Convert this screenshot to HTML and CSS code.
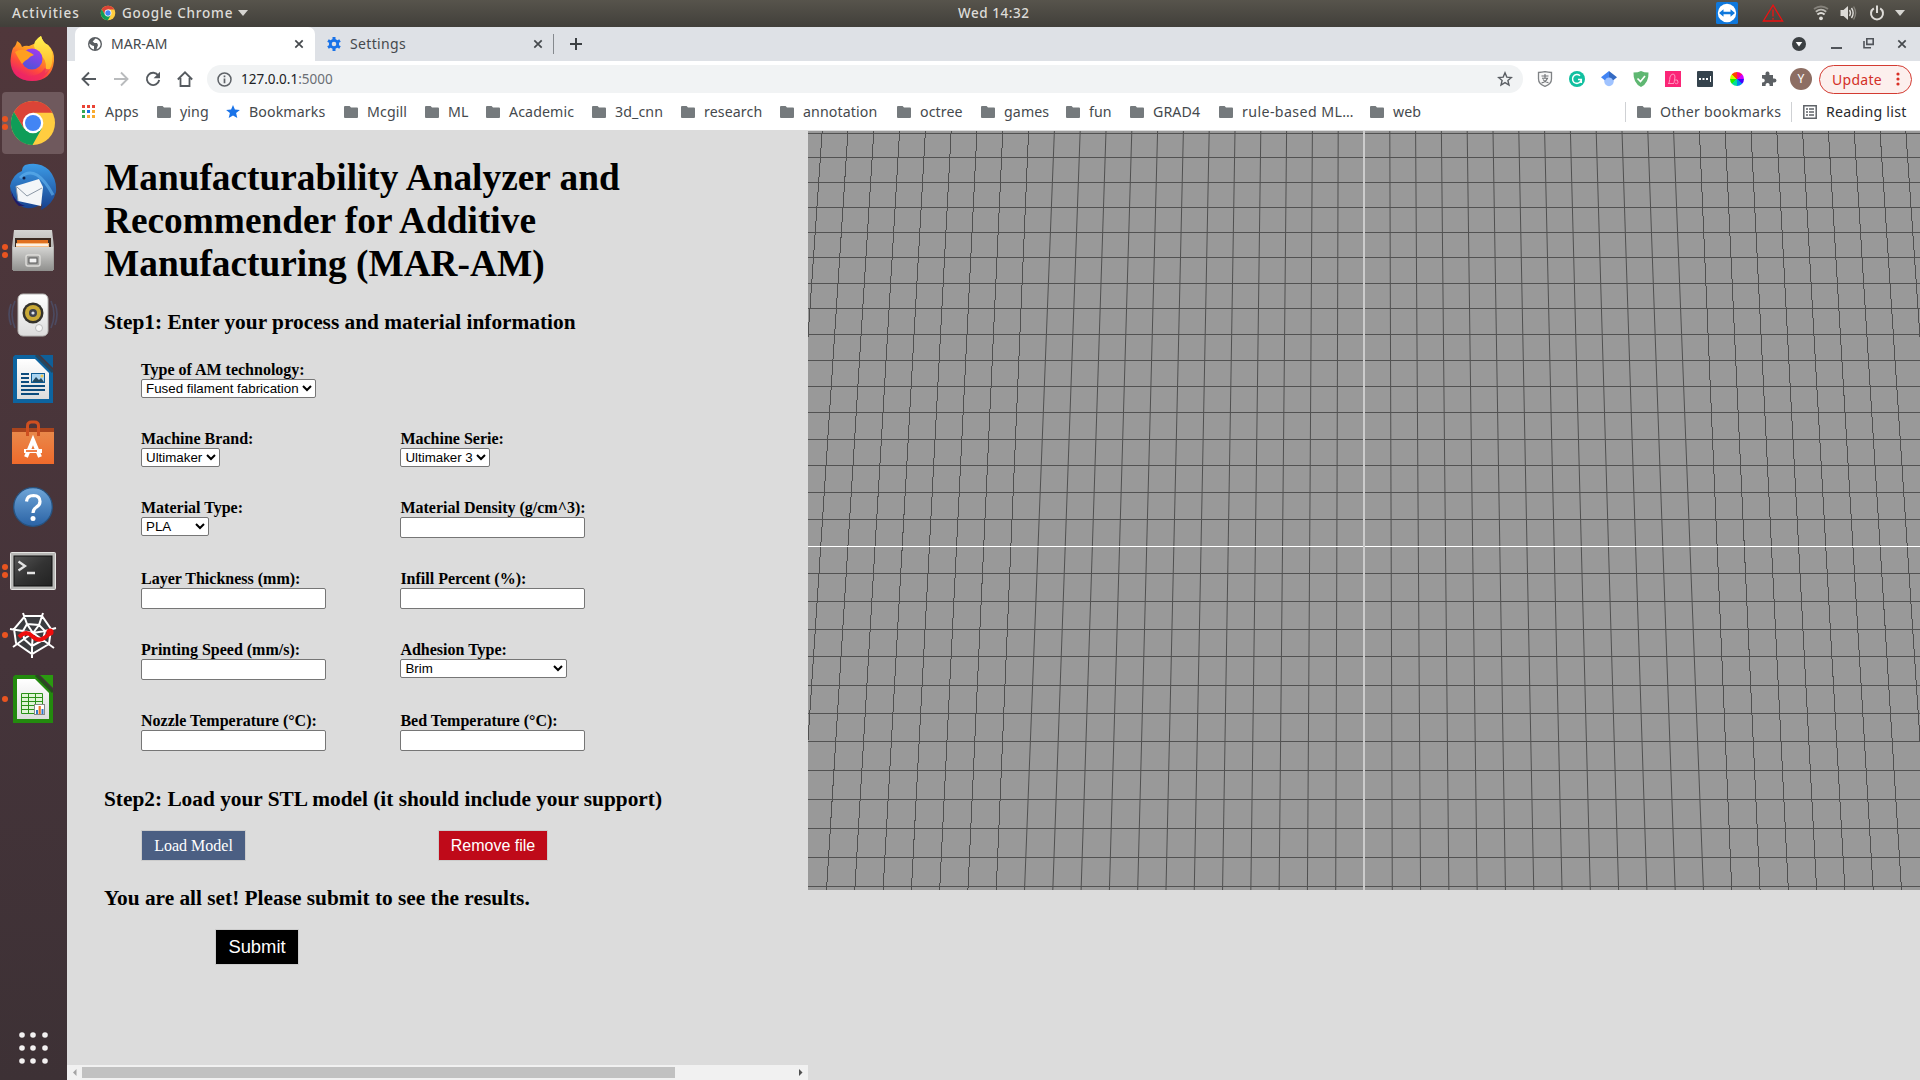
FILE: index.html
```html
<!DOCTYPE html>
<html lang="en">
<head>
<meta charset="utf-8">
<title>MAR-AM</title>
<link rel="stylesheet" href="styles.css">
</head>
<body>
<svg class="defs" width="0" height="0">
  <defs>
    <linearGradient id="ffBody" x1="0.8" y1="0" x2="0.3" y2="1"><stop offset="0" stop-color="#ffe14a"/><stop offset=".4" stop-color="#ff9a22"/><stop offset=".7" stop-color="#ff4a3c"/><stop offset="1" stop-color="#e3147a"/></linearGradient>
    <linearGradient id="ffFlame" x1="0" y1="0" x2="0" y2="1"><stop offset="0" stop-color="#fff34f"/><stop offset="1" stop-color="#ffae27"/></linearGradient>
    <linearGradient id="ffGlobe" x1="0.7" y1="0" x2="0.3" y2="1"><stop offset="0" stop-color="#a13af0"/><stop offset="1" stop-color="#4a55d8"/></linearGradient>
    <linearGradient id="bird" x1="0" y1="0" x2="0" y2="1"><stop offset="0" stop-color="#3c9be6"/><stop offset="1" stop-color="#173f8c"/></linearGradient>
    <linearGradient id="metal" x1="0" y1="0" x2="0" y2="1"><stop offset="0" stop-color="#d4d4d2"/><stop offset="1" stop-color="#8f8f8d"/></linearGradient>
    <linearGradient id="paper" x1="0" y1="0" x2="0" y2="1"><stop offset="0" stop-color="#ffffff"/><stop offset="1" stop-color="#dcdcdc"/></linearGradient>
    <linearGradient id="bag" x1="0" y1="0" x2="0" y2="1"><stop offset="0" stop-color="#e9884a"/><stop offset="1" stop-color="#ef6a2b"/></linearGradient>
    <linearGradient id="help" x1="0" y1="0" x2="0" y2="1"><stop offset="0" stop-color="#6ea5d8"/><stop offset="1" stop-color="#2a62a4"/></linearGradient>
    <linearGradient id="screen" x1="0" y1="0" x2="1" y2="1"><stop offset="0" stop-color="#555"/><stop offset=".5" stop-color="#333"/><stop offset="1" stop-color="#222"/></linearGradient>
    <symbol id="chrome" viewBox="0 0 48 48">
      <circle cx="24" cy="24" r="22" fill="#ffcd40"/>
      <path d="M4.900 13A22 22 0 0 1 43.400 13.700H24L14.800 29.300z" fill="#db4437"/>
      <path d="M4.900 13L14.800 29.300 24 34.300l8.900-5L23.500 46A22 22 0 0 1 4.900 13z" fill="#0f9d58"/>
      <circle cx="24" cy="24" r="10.300" fill="#fff"/><circle cx="24" cy="24" r="8" fill="#4285f4"/>
    </symbol>
    <symbol id="folder" viewBox="0 0 14 12"><path d="M1 0h4.6L7 1.600h6a1 1 0 0 1 1 1V11a1 1 0 0 1-1 1H1a1 1 0 0 1-1-1V1a1 1 0 0 1 1-1z" fill="#757a7d"/></symbol>
    <symbol id="cross" viewBox="0 0 10 10"><path d="M1.300 1.300l7.400 7.400M8.700 1.300L1.300 8.700" stroke="#45494d" stroke-width="1.700" fill="none"/></symbol>
  </defs>
</svg>

<header class="topbar">
  <span class="activities">Activities</span>
  <svg class="app-icon" width="16" height="16"><use href="#chrome"/></svg>
  <span class="app-name">Google Chrome</span>
  <svg class="caret" width="10" height="6"><path d="M0 0h10L5 6z" fill="#d6d5d1"/></svg>
  <span class="clock">Wed 14:32</span>
  <div class="tray">
    <svg width="22" height="22" viewBox="0 0 22 22"><rect width="22" height="22" rx="1.500" fill="#0f78dc"/><circle cx="11" cy="11" r="9.200" fill="#fff"/><path d="M3 11l4.500-3.700v2.500h7V7.300L19 11l-4.500 3.700v-2.500h-7v2.500z" fill="#0f78dc"/></svg>
    <svg width="22" height="18" viewBox="0 0 22 18"><path d="M11 1.200L20.600 17H1.400zM11 5.500v7M11 14v1.800" fill="none" stroke="#ee1111" stroke-width="1.300"/></svg>
    <svg width="16" height="16" viewBox="0 0 16 16"><circle cx="8" cy="13.300" r="1.900" fill="#dedcd8"/><path d="M4.400 9.500q3.600-3 7.200 0" fill="none" stroke="#dedcd8" stroke-width="2"/><path d="M2.800 6.700q5.200-4 10.400 0" fill="none" stroke="#bbb9b3" stroke-width="1.800"/><path d="M1 4q7-5 14 0" fill="none" stroke="#85827b" stroke-width="1.800"/></svg>
    <svg width="17" height="16" viewBox="0 0 17 16"><path d="M0.500 5h3L8 1v14L3.500 11h-3z" fill="#dedcd8"/><path d="M9.500 5q2 3 0 6M11.500 3q3.300 5 0 10" fill="none" stroke="#dedcd8" stroke-width="1.400"/><path d="M13.600 1.500q4 6.500 0 13" fill="none" stroke="#85827b" stroke-width="1.400"/></svg>
    <svg width="16" height="16" viewBox="0 0 16 16"><path d="M4.800 3.300a6 6 0 1 0 6.400 0M8 0.500v7.500" fill="none" stroke="#dedcd8" stroke-width="2"/></svg>
    <svg width="10" height="6"><path d="M0 0h10L5 6z" fill="#d6d5d1"/></svg>
  </div>
</header>

<div class="desktop">
  <nav class="dock">
    <div class="launcher"><svg width="48" height="48" viewBox="0 0 48 48">
      <path d="M4 13q3-2 4-7 4 2 5 6 3-2 7-1L27 8Q28 3 32 1q2 7 7 9 7 6 6 16-2 20-22 20Q2 45 1.500 26 2 18 4 13z" fill="url(#ffBody)"/>
      <path d="M32 1q2 7 7 9 6 6 4 18-1 7-7 10 3-10-3-17-7-5-8-10 0-6 7-10z" fill="url(#ffFlame)"/>
      <circle cx="23" cy="24" r="10.500" fill="url(#ffGlobe)"/>
      <path d="M6 17q7-5 16 1l3 2q-4 1-6 4-4 2-6 5-4-6-7-12z" fill="#ff9f20"/>
      <path d="M2 28q4 12 16 13 12 1 18-8 2 2 5 1-6 12-19 12Q5 45 2 28z" fill="#f02a60" opacity=".7"/></svg></div>
    <div class="launcher active windows-2"><svg width="48" height="48"><use href="#chrome"/></svg></div>
    <div class="launcher"><svg width="50" height="50" viewBox="0 0 50 50">
      <path d="M17 3q14-4 24 5 8 9 7 22-3 12-15 18l1-6Q20 50 12 43 3 38 2 24 5 12 14 9q0-4 3-6z" fill="url(#bird)"/>
      <path d="M8 24L31 17l4 8-2 19L10 39z" fill="#f4f6f8"/><path d="M9 25l10 9 15-8M8 24l2 15" fill="none" stroke="#8c98a6" stroke-width="1"/>
      <path d="M12 16q8-8 17-3 8 5 16 20" fill="none" stroke="#66b5f0" stroke-width="3" opacity=".6"/><path d="M3 28q4 13 14 16l-6 0Q4 38 3 28z" fill="#211a66"/><circle cx="16" cy="16" r="1.500" fill="#10214a"/></svg></div>
    <div class="launcher windows-2"><svg width="44" height="46" viewBox="0 0 44 46">
      <path d="M3 2h38l2 17v23H1V19z" fill="url(#metal)"/><rect x="4" y="10" width="36" height="12" fill="#3a2a22"/><path d="M6 12h31v8H6z" fill="#e07020"/><path d="M5 15h33v6H5z" fill="#f6c08a"/><path d="M5 17h32" stroke="#fff" stroke-width="1.500"/>
      <path d="M2 19h40v24H2z" fill="url(#metal)"/><rect x="15" y="27" width="14" height="11" rx="2" fill="#a5a5a3" stroke="#deddda" stroke-width="1.400"/><rect x="18" y="30" width="8" height="5" fill="#f2f2f2" stroke="#555"/></svg></div>
    <div class="launcher"><svg width="50" height="46" viewBox="0 0 50 46">
      <path d="M7 9Q1 22 7 36M3 12Q-1 22 3 33M43 9q6 13 0 27M47 12q4 10 0 21" fill="none" stroke="#4c4a60" stroke-width="1.700"/><rect x="10" y="2" width="30" height="42" rx="5" fill="url(#paper)" stroke="#b5b5b3"/><circle cx="25" cy="21" r="10.500" fill="#34322c"/><circle cx="25" cy="21" r="8" fill="#c9a936"/><circle cx="25" cy="21" r="4" fill="#3f4250"/><circle cx="25" cy="21" r="1.600" fill="#dfe3ee"/><circle cx="31" cy="36" r="3.500" fill="#f7f7f7" stroke="#bbb"/></svg></div>
    <div class="launcher"><svg width="40" height="48" viewBox="0 0 40 48">
      <path d="M2 0h22l16 16v32H0V2z" fill="#0d64a0"/><path d="M4 4h18l14 14v26H4z" fill="url(#paper)"/><path d="M27 0h13v13z" fill="#0f5f98"/><path d="M23 0l17 17" stroke="#24465f" stroke-width="3"/>
      <path d="M8 19h8M8 23h8M8 27h8M8 31h24M8 35h24M8 39h18" stroke="#0d4c7d" stroke-width="1.900"/><rect x="18.500" y="18.500" width="13" height="9" fill="#aad4f0" stroke="#0d5b92"/><path d="M19 27l4-5 3 3 2-2 3 4z" fill="#244b62"/><circle cx="29" cy="21" r="1.500" fill="#f3c84d"/></svg></div>
    <div class="launcher"><svg width="42" height="46" viewBox="0 0 42 46">
      <path d="M0 8h42v8H0z" fill="#a9441d"/><path d="M0 12h42v32H0z" fill="url(#bag)"/><path d="M15.500 16V6q0-4 4-4h3q4 0 4 4v10" fill="none" stroke="#cf4f20" stroke-width="3"/>
      <path d="M14 37l7-17 7 17M12 31h18" fill="none" stroke="#fff" stroke-width="4"/><path d="M14 31h11" stroke="#ed6a2b" stroke-width="1.700"/></svg></div>
    <div class="launcher"><svg width="42" height="42" viewBox="0 0 42 42"><circle cx="21" cy="21" r="19.300" fill="url(#help)" stroke="#275380" stroke-width="1.300"/><path d="M14.500 15.500q.5-6 7-6 6.500.3 6.500 6 0 3.500-3.500 5.500-3.500 2.200-3.500 6" fill="none" stroke="#fff" stroke-width="3.200"/><circle cx="21" cy="32.500" r="2.500" fill="#fff"/></svg></div>
    <div class="launcher windows-2"><svg width="46" height="38" viewBox="0 0 46 38"><rect x=".5" y=".5" width="45" height="37" rx="1" fill="#b9b9b7" stroke="#e5e5e3"/><rect x="4" y="4" width="38" height="30" fill="url(#screen)" stroke="#111"/><path d="M8.500 9.500l6.500 4.500-6.500 4.500M17 21h8" fill="none" stroke="#e3e3e3" stroke-width="2.300"/></svg></div>
    <div class="launcher windows-1"><svg width="48" height="48" viewBox="0 0 48 48">
      <path d="M16 5h17l9 13-2 15-17 10L7 32 5 18z" fill="#3b3c40"/><path d="M16 5h17l9 13-2 15-17 10L7 32 5 18zM14 2l4 11 6 9M34 2l-4 12-6 8M1 18l13 2 10 2 12-2 11-3M4 36l11-8 9-6 10 7 11 8M23 47V35l1-13M18 13l12 1 6 6-2 9-11 6-8-7-1-8z" fill="none" stroke="#fff" stroke-width="2"/>
      <path d="M10 26q7-7 13-1t12 2l8-6" fill="none" stroke="#ee0d0d" stroke-width="4"/><circle cx="41" cy="21" r="3.600" fill="#ee0d0d"/></svg></div>
    <div class="launcher windows-1"><svg width="40" height="48" viewBox="0 0 40 48">
      <path d="M2 0h22l16 16v32H0V2z" fill="#238a0e"/><path d="M4 4h18l14 14v26H4z" fill="url(#paper)"/><path d="M27 0h13v13z" fill="#2a9a10"/><path d="M23 0l17 17" stroke="#264d1d" stroke-width="3"/>
      <path d="M8.500 18.500h21v20h-21zM8.500 22.500h21M8.500 26.500h21M8.500 30.500h21M8.500 34.500h21M15.500 18v20M22.500 18v20" fill="#e0f5d6" stroke="#2b9118"/><rect x="21.500" y="29.500" width="10" height="10" fill="#fff" stroke="#888"/><path d="M24 39v-4" stroke="#3278c8" stroke-width="2"/><path d="M26.700 39v-8" stroke="#ee7722" stroke-width="2.200"/><path d="M29.500 39v-5" stroke="#3278c8" stroke-width="2"/></svg></div>
    <svg class="show-apps" width="34" height="34" viewBox="0 0 34 34" fill="#f3f1f1"><circle cx="6" cy="4" r="2.800"/><circle cx="17" cy="4" r="2.800"/><circle cx="29" cy="4" r="2.800"/><circle cx="6" cy="17" r="2.800"/><circle cx="17" cy="17" r="2.800"/><circle cx="29" cy="17" r="2.800"/><circle cx="6" cy="30" r="2.800"/><circle cx="17" cy="30" r="2.800"/><circle cx="29" cy="30" r="2.800"/></svg>
  </nav>

  <main class="browser">
    <div class="tabstrip">
      <div class="tab tab-active">
        <svg width="14" height="14" viewBox="0 0 14 14"><circle cx="7" cy="7" r="7" fill="#5a5e62"/><path d="M7.500 1.500L4.700 4.500 6.500 6H9l1 2-1.500 4.300Q12.500 11 12.600 7 12 2.500 7.500 1.500zM1.300 6.500L4 8.500l2 .5v3.600Q1.500 11.500 1.300 6.500z" fill="#fff"/></svg>
        <span class="t-mar">MAR-AM</span>
        <svg class="close" width="10" height="10"><use href="#cross"/></svg>
      </div>
      <div class="tab tab-settings">
        <svg width="14" height="14" viewBox="0 0 14 14"><circle cx="7" cy="7" r="3.700" fill="none" stroke="#1a73e8" stroke-width="2.800"/><path d="M7 0v3M7 11v3M1 3.500l2.600 1.500M10.400 9L13 10.500M1 10.500L3.600 9M10.400 5L13 3.500" stroke="#1a73e8" stroke-width="3"/></svg>
        <span class="t-settings">Settings</span>
        <svg class="close" width="10" height="10"><use href="#cross"/></svg>
      </div>
      <svg class="newtab" width="12" height="12"><path d="M6 0v12M0 6h12" stroke="#3c4043" stroke-width="2"/></svg>
      <div class="window-buttons">
        <svg width="14" height="14"><circle cx="7" cy="7" r="7" fill="#3c4043"/><path d="M3.700 5h6.600L7 9.500z" fill="#fff"/></svg>
        <svg width="11" height="14"><path d="M0 11h11" stroke="#50545a" stroke-width="2"/></svg>
        <svg width="11" height="11"><path d="M3.800.8h6.400v5.600H3.800zM1 3v6.700h7" fill="none" stroke="#50545a" stroke-width="1.600"/></svg>
        <svg width="10" height="10"><use href="#cross"/></svg>
      </div>
    </div>

    <div class="toolbar">
      <div class="nav-icons">
        <svg width="16" height="16" viewBox="0 0 16 16"><path d="M15 8H2M8 1.500L1.500 8 8 14.500" fill="none" stroke="#555a5f" stroke-width="1.900"/></svg>
        <svg width="16" height="16" viewBox="0 0 16 16"><path d="M1 8h13M8 1.500L14.500 8 8 14.500" fill="none" stroke="#b9bbbd" stroke-width="1.900"/></svg>
        <svg width="16" height="16" viewBox="0 0 16 16"><path d="M13.300 4.500A6.200 6.200 0 1 0 14.200 9" fill="none" stroke="#555a5f" stroke-width="1.900"/><path d="M15 0.800v6.400H8.600z" fill="#555a5f"/></svg>
        <svg width="16" height="16" viewBox="0 0 16 16"><path d="M3.500 7v8h9V7M.8 8.500L8 1.300l7.200 7.200" fill="none" stroke="#555a5f" stroke-width="1.800"/></svg>
      </div>
      <div class="omnibox">
        <svg width="15" height="15" viewBox="0 0 15 15"><circle cx="7.500" cy="7.500" r="6.500" fill="none" stroke="#5f6368" stroke-width="1.500"/><path d="M7.500 6.500v4.700M7.500 3.600v1.700" stroke="#5f6368" stroke-width="1.700"/></svg>
        <span class="url">127.0.0.1<span class="port">:5000</span></span>
        <svg class="star" width="16" height="16" viewBox="0 0 16 16"><path d="M8 1.800l1.800 4.300 4.600.4-3.500 3 1.100 4.600L8 11.600l-4 2.500 1.100-4.600-3.500-3 4.600-.4z" fill="none" stroke="#5a5e63" stroke-width="1.400"/></svg>
      </div>
      <div class="extensions">
        <svg width="16" height="16" viewBox="0 0 16 16"><path d="M1.500 1.500Q5 1.500 8 .7q3 .8 6.500.8V8q0 5-6.500 7.300Q1.500 13 1.500 8z" fill="#f8f8f8" stroke="#7f8285" stroke-width="1.300"/><path d="M4.500 5h7M8 3v4M5 7.300h5.500Q9 11 4.500 12M6 8.500q2 3 5.500 3.300" fill="none" stroke="#6e7174" stroke-width="1.100"/></svg>
        <svg width="16" height="16" viewBox="0 0 16 16"><circle cx="8" cy="8" r="8" fill="#11c0a0"/><path d="M11 4.800A4.400 4.400 0 1 0 12.300 8.500H9M12.300 8v4" fill="none" stroke="#fff" stroke-width="1.500"/></svg>
        <svg width="16" height="16" viewBox="0 0 16 16"><circle cx="8" cy="10.500" r="4.700" fill="#a0c3ff"/><path d="M8 0L0 6.300l4 3.200Q5 6.600 8 6.600z" fill="#4285f4"/><path d="M8 0l8 6.300-4 3.200Q11 6.600 8 6.600z" fill="#356ac3"/></svg>
        <svg width="16" height="16" viewBox="0 0 16 16"><path d="M.5 1.500Q5 1.500 8 0q3 1.500 7.500 1.500Q16 12 8 16 0 12 .5 1.500z" fill="#5fb772"/><path d="M4.500 7.500L7.500 10.500l4.500-5.500" fill="none" stroke="#fff" stroke-width="1.700"/></svg>
        <svg width="16" height="16" viewBox="0 0 16 16"><rect width="16" height="16" fill="#fb2577"/><path d="M4 12q1-4 1-6 1-3 3-3t2 3l-1 6M3 12.500h6M10 9q3-1 3 2t-3 1" fill="none" stroke="#ff95be" stroke-width="1"/></svg>
        <svg width="16" height="16" viewBox="0 0 16 16"><rect width="16" height="16" rx="1" fill="#35434d"/><path d="M2 7h2v2H2zM5.500 7h2v2h-2zM9 7h2v2H9zM13 5h1v6h-1z" fill="#fff"/></svg>
        <span class="wheel"></span>
        <svg width="16" height="16" viewBox="0 0 16 16"><path d="M1 4h3.600Q4 .5 6.500.5T8.400 4H12v3.600q3.500-.6 3.500 1.900T12 11.400V15H8.600q.3-3-2-3t-2 3H1v-3.500q2.800.2 2.800-2T1 7.500z" fill="#5c6064"/></svg>
      </div>
      <span class="avatar">Y</span>
      <div class="update"><span>Update</span><svg width="4" height="14" fill="#d93025"><circle cx="2" cy="2" r="1.600"/><circle cx="2" cy="7" r="1.600"/><circle cx="2" cy="12" r="1.600"/></svg></div>
    </div>

    <div class="bookmarks">
      <div class="bookmark-items">
        <div class="bm"><svg width="14" height="13" viewBox="0 0 14 13"><path d="M0 0h3v3H0zM5 0h3v3H5zM10 0h3v3h-3z" fill="#ea4335"/><path d="M0 5h3v3H0z" fill="#34a853"/><path d="M5 5h3v3H5z" fill="#1a73e8"/><path d="M10 5h3v3h-3zM5 10h3v3H5zM10 10h3v3h-3z" fill="#f9ab2f"/><path d="M0 10h3v3H0z" fill="#34a853"/></svg><span>Apps</span></div>
        <div class="bm"><svg width="14" height="12"><use href="#folder"/></svg><span>ying</span></div>
        <div class="bm"><svg width="14" height="13" viewBox="0 0 14 13"><path d="M7 0l1.900 4.500 5 .4-3.800 3.200L11.300 13 7 10.400 2.700 13l1.200-4.900L.1 4.900l5-.4z" fill="#1a73e8"/></svg><span>Bookmarks</span></div>
        <div class="bm"><svg width="14" height="12"><use href="#folder"/></svg><span>Mcgill</span></div>
        <div class="bm"><svg width="14" height="12"><use href="#folder"/></svg><span>ML</span></div>
        <div class="bm"><svg width="14" height="12"><use href="#folder"/></svg><span>Academic</span></div>
        <div class="bm"><svg width="14" height="12"><use href="#folder"/></svg><span>3d_cnn</span></div>
        <div class="bm"><svg width="14" height="12"><use href="#folder"/></svg><span>research</span></div>
        <div class="bm"><svg width="14" height="12"><use href="#folder"/></svg><span>annotation</span></div>
        <div class="bm"><svg width="14" height="12"><use href="#folder"/></svg><span>octree</span></div>
        <div class="bm"><svg width="14" height="12"><use href="#folder"/></svg><span>games</span></div>
        <div class="bm"><svg width="14" height="12"><use href="#folder"/></svg><span>fun</span></div>
        <div class="bm"><svg width="14" height="12"><use href="#folder"/></svg><span>GRAD4</span></div>
        <div class="bm rule"><svg width="14" height="12"><use href="#folder"/></svg><span>rule-based ML…</span></div>
        <div class="bm"><svg width="14" height="12"><use href="#folder"/></svg><span>web</span></div>
      </div>
      <div class="bm other"><svg width="14" height="12"><use href="#folder"/></svg><span>Other bookmarks</span></div>
      <div class="bm reading"><svg width="14" height="14" viewBox="0 0 14 14"><path d="M.8.8h12.400v12.400H.8z" fill="none" stroke="#5f6368" stroke-width="1.500"/><path d="M3 4h2M3 7h2M3 10h2M6 4h5M6 7h5M6 10h5" stroke="#5f6368" stroke-width="1.400"/></svg><span>Reading list</span></div>
    </div>

    <div class="page">
      <section class="panel">
        <div class="panel-body">
          <h1>Manufacturability Analyzer and Recommender for Additive Manufacturing (MAR-AM)</h1>
          <h3>Step1: Enter your process and material information</h3>
          <form class="fields">
            <label class="field wide">Type of AM technology:<select class="w-tech"><option>Fused filament fabrication</option></select></label>
            <label class="field">Machine Brand:<select class="w-brand"><option>Ultimaker</option></select></label>
            <label class="field">Machine Serie:<select class="w-serie"><option>Ultimaker 3</option></select></label>
            <label class="field">Material Type:<select class="w-material"><option>PLA</option></select></label>
            <label class="field">Material Density (g/cm^3):<input type="text"></label>
            <label class="field">Layer Thickness (mm):<input type="text"></label>
            <label class="field">Infill Percent (%):<input type="text"></label>
            <label class="field">Printing Speed (mm/s):<input type="text"></label>
            <label class="field">Adhesion Type:<select class="w-adhesion"><option>Brim</option></select></label>
            <label class="field">Nozzle Temperature (°C):<input type="text"></label>
            <label class="field">Bed Temperature (°C):<input type="text"></label>
          </form>
          <h3>Step2: Load your STL model (it should include your support)</h3>
          <div class="file-actions">
            <button class="btn load">Load Model</button>
            <button class="btn remove">Remove file</button>
          </div>
          <h3>You are all set! Please submit to see the results.</h3>
          <button class="btn submit">Submit</button>
        </div>
        <div class="scrollbar">
          <svg width="15" height="15"><path d="M9.500 4v7L6 7.500z" fill="#a3a3a3"/></svg>
          <div class="track"><div class="thumb"></div></div>
          <svg width="15" height="15"><path d="M6 4v7l3.500-3.500z" fill="#505050"/></svg>
        </div>
      </section>
      <section class="viewer"><svg id="grid" width="1112" height="759" viewBox="0 0 1112 759"></svg></section>
    </div>
  </main>
</div>
<script src="script.js"></script>
</body>
</html>
```
FILE: styles.css
```css
* { box-sizing: border-box; }
body { margin: 0; width: 1920px; height: 1080px; overflow: hidden; font-family: "Noto Sans", sans-serif; font-size: 14px; color: #45494d; }
svg { display: block; flex: none; }
.defs { position: absolute; }

.topbar { height: 27px; display: flex; align-items: center; background: linear-gradient(#57544c, #413f3a); color: #dedcd8; font-size: 13.5px; font-weight: 500; white-space: nowrap; padding: 0 0 1px 12px; }
.activities { width: 88px; letter-spacing: .95px; }
.app-icon { margin-right: 6px; }
.app-name { width: 117px; letter-spacing: .8px; }
.caret { margin-left: -1px; }
.clock { margin-left: 710px; width: 100px; letter-spacing: .55px; }
.tray { margin-left: auto; margin-right: 15px; display: grid; grid-template-columns: 46px 51px 27px 29px 26px 10px; align-items: center; }

.desktop { display: flex; height: 1053px; }
.dock { width: 67px; height: 1053px; padding-right: 1px; background: linear-gradient(#50373b, #45343a 60%, #3d3135); display: flex; flex-direction: column; align-items: center; }
.launcher { width: 62px; height: 62px; margin-bottom: 2px; display: flex; align-items: center; justify-content: center; position: relative; flex: none; border-radius: 4px; }
.launcher:first-child { margin-top: 1px; }
.launcher.active { background: #6f595d; }
.windows-1::before, .windows-2::before { content: ""; position: absolute; left: 0; top: 28px; width: 6px; height: 6px; border-radius: 50%; background: #e95420; }
.windows-2::before { top: 24px; box-shadow: 0 8px #e95420; }
.show-apps { margin-top: auto; margin-bottom: 15px; }

.browser { width: 1853px; display: flex; flex-direction: column; background: #fff; white-space: nowrap; }
.tabstrip { height: 34px; background: #dee1e6; display: flex; align-items: center; padding-left: 8px; font-size: 14px; }
.tab { height: 34px; display: flex; align-items: center; gap: 9px; padding-bottom: 1px; }
.tab .close { margin-left: auto; }
.tab-active { width: 240px; background: #fff; border-radius: 7px 7px 0 0; padding: 0 11px 1px 13px; }
.tab-settings { width: 239px; height: 20px; padding: 0 10px 1px 12px; border-right: 1px solid #85898e; }
.t-settings { letter-spacing: .35px; }
.newtab { margin-left: 16px; }
.window-buttons { margin-left: auto; margin-right: 13px; display: grid; grid-template-columns: 39px 32px 34px 10px; align-items: center; padding-bottom: 1px; }

.toolbar { height: 36px; display: flex; align-items: center; padding-left: 14px; }
.nav-icons { display: flex; gap: 16px; }
.omnibox { margin-left: 14px; width: 1316px; height: 28px; border-radius: 14px; background: #f1f3f4; display: flex; align-items: center; padding: 0 10px; gap: 9px; font-size: 13.5px; }
.url { color: #202124; letter-spacing: 0; }
.port { color: #6b6f74; }
.star { margin-left: auto; }
.extensions { margin-left: 14px; display: flex; gap: 16px; }
.wheel { width: 14px; height: 14px; margin: 1px; border-radius: 50%; background: conic-gradient(#f08 0 45deg, #c0f 0 90deg, #40f 0 135deg, #08e 0 180deg, #0d9 0 225deg, #2e0 0 270deg, #cf0 0 315deg, #f40 0); }
.avatar { margin-left: 13px; width: 22px; height: 22px; border-radius: 50%; background: #8d6e63; color: #fff; font-size: 12px; line-height: 22px; text-align: center; }
.update { margin-left: 7px; width: 93px; height: 29px; border: 1px solid #d33b32; border-radius: 15px; background: #fcefed; color: #d33027; display: flex; align-items: center; justify-content: space-between; padding: 0 11px 0 12px; font-size: 14px; letter-spacing: .3px; }

.bookmarks { height: 34px; border-bottom: 1px solid #dcdcdc; display: flex; align-items: center; padding: 0 0 4px 15px; font-size: 14.200px; }
.bookmark-items { display: grid; grid-template-columns: 75px 69px 118px 81px 61px 106px 89px 99px 117px 84px 85px 64px 89px 151px 60px; }
.bm { display: flex; align-items: center; gap: 9px; height: 20px; letter-spacing: .1px; }
.rule { letter-spacing: .4px; }
.other { margin-left: auto; width: 166px; padding-left: 11px; border-left: 1px solid #cfd1d4; letter-spacing: .25px; }
.reading { width: 129px; padding-left: 11px; border-left: 1px solid #cfd1d4; color: #27292c; letter-spacing: .25px; }

.page { height: 949px; display: flex; background: #dcdcdc; color: #000; }
.panel { width: 741px; display: flex; flex-direction: column; font-family: "Liberation Serif", serif; white-space: normal; }
.panel-body { flex: 1; padding: 25px 37px 0; }
h1 { margin: 0 0 25px; width: 560px; font-size: 37.333px; line-height: 43px; }
h3 { margin: 0; font-size: 21.333px; line-height: 24px; white-space: nowrap; }
.fields { margin: 27px 0 0 37px; display: grid; grid-template-columns: 259.4px 259px; grid-template-rows: 69px 69px 71px 71px 71px 75px; }
.field { font-weight: bold; font-size: 16px; line-height: 18px; white-space: nowrap; }
.wide { grid-column: span 2; }
.field select, .field input { display: block; margin: 0; font: 13.333px "Liberation Sans", sans-serif; color: #000; background: #fff; border: 1px solid #767676; border-radius: 2px; }
.field select { height: 19px; padding: 0; }
.field input { width: 185px; height: 21px; }
.w-tech { width: 175px; }
.w-brand { width: 79px; }
.w-serie { width: 90px; }
.w-material { width: 68px; }
.w-adhesion { width: 167px; }
.btn { display: block; margin: 0; padding: 0; border: 1px solid #cccccc; color: #fff; font: 16px "Liberation Sans", sans-serif; }
.file-actions { display: flex; gap: 192px; margin: 19px 0 25px 37px; }
.load { width: 105px; height: 31px; background: #4b5f83; font-family: "Liberation Serif", serif; }
.remove { width: 110px; height: 31px; background: #bf0a19; }
.submit { margin: 19px 0 0 111px; width: 84px; height: 36px; background: #000; font-size: 18.400px; }
.scrollbar { height: 15px; background: #f1f1f1; display: flex; }
.track { flex: 1; padding: 2px 0; }
.thumb { width: 593px; height: 11px; background: #c1c1c1; }
.viewer { width: 1112px; height: 759px; background: #999; }
```
FILE: script.js
```javascript
// Ground grid seen in perspective: rows get further apart and columns spread toward the viewer.
const svg = document.getElementById("grid");
const centerX = 556;
const height = 759;
const topStep = 25.8;
const bottomStep = 28.29;
const rows = [2, 26, 51, 76, 101, 126, 152, 177, 203, 229, 255, 281, 308, 334, 361, 388,
  442, 470, 498, 525, 554, 582, 610, 639, 668, 697, 726, 755];

function line(x1, y1, x2, y2, color, width, crisp) {
  const el = document.createElementNS("http://www.w3.org/2000/svg", "line");
  const attrs = { x1, y1, x2, y2, stroke: color, "stroke-width": width };
  if (crisp) attrs["shape-rendering"] = "crispEdges";
  for (const name in attrs) el.setAttribute(name, attrs[name]);
  svg.appendChild(el);
}

for (let k = 1; k <= 21; k++) {
  for (const side of [-1, 1]) {
    line(centerX + side * k * topStep, 0, centerX + side * k * bottomStep, height, "#505050", 1, k > 12);
  }
}
for (const y of rows) line(0, y + 0.5, 1112, y + 0.5, "#525252", 1, true);
line(0, 415.5, 1112, 415.5, "#ffffff", 1, true);
line(centerX, 0, centerX, height, "#cccccc", 2, true);
```
